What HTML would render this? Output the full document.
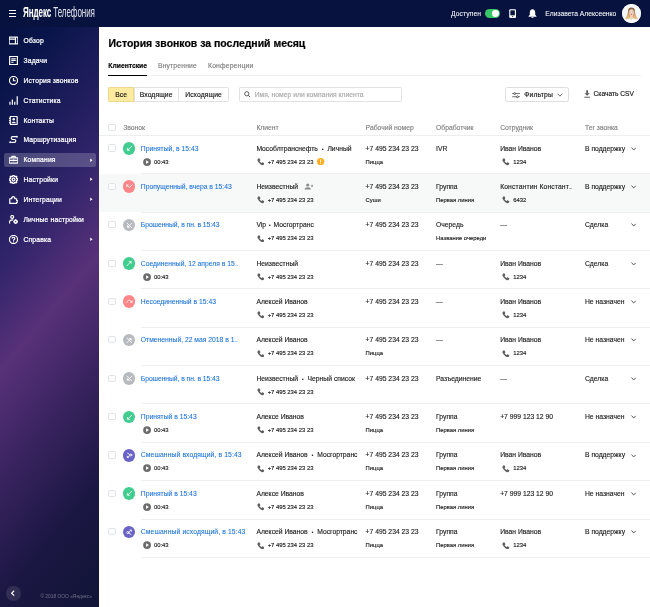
<!DOCTYPE html>
<html lang="ru"><head><meta charset="utf-8"><title>История звонков</title>
<style>
html,body{margin:0;padding:0;width:650px;height:607px;overflow:hidden;background:#fff}
#app{position:absolute;left:0;top:0;width:1440px;height:1345px;zoom:0.451389;will-change:transform;font-family:"Liberation Sans",sans-serif;font-size:14px;color:#111;overflow:hidden;-webkit-text-stroke:0.3px currentColor}
#app *{box-sizing:border-box}
svg{display:block}
.hdr{position:absolute;left:0;top:0;width:1440px;height:60px;background:#07123f;color:#fff;-webkit-text-stroke:0.1px #fff}
.burger{position:absolute;left:20px;top:23px;width:16px;height:15px}
.burger i{display:block;height:2.4px;background:#fff;margin-bottom:3.8px}
.logo{position:absolute;left:52px;top:12px;font-size:32px;line-height:34px;white-space:nowrap;transform:scaleX(0.557);transform-origin:0 50%;color:#fff;letter-spacing:-0.3px}
.logo b{font-weight:bold}
.logo i{font-style:normal;color:#dfe1ec;-webkit-text-stroke:0}
.avail{position:absolute;left:999px;top:20px;letter-spacing:.2px;font-size:15px;line-height:20px;white-space:nowrap}
.tgl{position:absolute;left:1075px;top:20px;width:33px;height:19px;border-radius:10px;background:#37c766}
.tgl i{position:absolute;right:2px;top:2px;width:15px;height:15px;border-radius:50%;background:#fff}
.hph{position:absolute;left:1128px;top:20px}
.bell{position:absolute;left:1170px;top:20px}
.uname{position:absolute;left:1208px;top:20px;letter-spacing:-.05px;font-size:15px;line-height:20px;white-space:nowrap}
.ava{position:absolute;left:1377.500px;top:8.500px;width:42px;height:42px;border-radius:50%;overflow:hidden;background:#f4efe9}
.side{position:absolute;left:0;top:60px;width:220px;height:1285px;color:#fff;background:linear-gradient(130deg,#061140 0%,#09154a 9%,#1a1b58 20%,#30246a 34%,#583179 49.5%,#3b2461 64%,#1b1743 82%,#111436 100%)}
.ni{position:absolute;left:8px;width:204px;height:32px;border-radius:5px}
.ni.act{background:rgba(255,255,255,0.2)}
.nic{position:absolute;left:12px;top:6px}
.nl{position:absolute;left:44px;top:6px;font-size:15px;-webkit-text-stroke:0.5px #fff;letter-spacing:.35px;line-height:20px;font-weight:normal;white-space:nowrap}
.arr{position:absolute;right:6.500px;top:11px;width:6px;height:10px}
.back{position:absolute;left:13.500px;top:1238.500px;width:32px;height:32px;border-radius:50%;background:rgba(255,255,255,0.1)}
.copy{position:absolute;left:89.500px;top:1256.500px;font-size:10.800px;line-height:14px;color:rgba(255,255,255,0.36);white-space:nowrap;-webkit-text-stroke:0}
.main{position:absolute;left:220px;top:60px;width:1220px;height:1285px;background:#fff}
h1{position:absolute;left:20.500px;top:20.200px;margin:0;font-size:23.200px;-webkit-text-stroke:0.45px #000;line-height:36px;font-weight:bold;white-space:nowrap;color:#000}
.tabs{position:absolute;left:20px;top:72px;width:1180px;height:37px;border-bottom:2px solid #f0f0f0}
.tab{position:absolute;top:4px;font-size:14px;line-height:20px;color:#7d7d7d;white-space:nowrap;letter-spacing:.38px;font-size:15px}
.tab.on{left:0;color:#000;font-weight:bold;letter-spacing:0}
.tab.on:after{content:"";position:absolute;left:0;right:0;top:31px;height:2px;background:#000}
.tab.t2{left:110px}.tab.t3{left:221px}
.seg{position:absolute;left:20px;top:133px;height:32px}
.sb{position:absolute;top:0;height:32px;border:1px solid #e2e2e2;font-size:15px;letter-spacing:.2px;line-height:30px;text-align:center;white-space:nowrap;background:#fff}
.s1{left:0;width:57px;background:#ffeba0;border-color:#ecd98c;z-index:1;border-radius:3px 0 0 3px}
.s2{left:56px;width:100px}
.s3{left:155px;width:112px;border-radius:0 3px 3px 0}
.search{position:absolute;left:310px;top:133px;width:360px;height:32px;border:1px solid #e2e2e2;border-radius:3px}
.search svg{position:absolute;left:7.500px;top:6.500px}
.search span{position:absolute;left:32px;top:0;line-height:30px;font-size:15px;color:#a8a8a8;white-space:nowrap}
.fbtn{position:absolute;left:899px;top:133px;width:141px;height:32px;border:1px solid #dedede;border-radius:5px}
.fbtn svg:first-child{position:absolute;left:13px;top:8.500px}
.fbtn span{position:absolute;left:40px;top:0;line-height:30px;font-size:15px;letter-spacing:.4px;white-space:nowrap}
.fbtn svg:last-child{position:absolute;left:113px;top:10.500px}
.csv{position:absolute;left:1070px;top:133px;height:32px}
.csv svg{position:absolute;left:4px;top:6px}
.csv span{position:absolute;left:25px;top:0;line-height:32px;font-size:14.700px;white-space:nowrap}
.thead{position:absolute;left:0;top:201px;width:1220px;padding-left:20px;height:41px;border-bottom:1px solid #eceeef}
.th{position:absolute;top:11.500px;font-size:15px;line-height:20px;color:#808080;white-space:nowrap}
.cb{position:absolute;left:0;width:16px;height:16px;border:1px solid #dfe3e7;border-radius:4px;background:#fff}
.thead .cb{top:13.500px;left:20px}
.h1{left:53px}.h2{left:348px}.h3{left:590px}.h4{left:746px}.h5{left:888px}.h6{left:1076px}
.tbody{position:absolute;left:0;top:240px;width:1220px}
.row{position:relative;height:85px;width:1220px}
.row.hl{background:#f7f8f8}
.row .cb{left:20px;top:20px}
.ci{position:absolute;left:52px;top:14.700px;width:28px;height:28px;border-radius:50%}
.c{position:absolute;top:0;white-space:nowrap}
.c1{left:92px}.c2{left:348px}.c3{left:590px}.c4{left:746px}.c5{left:888px}.c6{left:1076px}
.l1{position:absolute;left:0;top:18px;font-size:15px;line-height:20px;white-space:nowrap;color:#1c1c1c}
.l2{position:absolute;left:0;top:49px;height:18px;white-space:nowrap}
.s11{position:relative;font-size:13px;color:#1c1c1c;-webkit-text-stroke:0.32px currentColor;line-height:18px;display:inline-block;vertical-align:top}
.lnk{color:#1670dd;-webkit-text-stroke:0.15px #1670dd}
.dot{font-weight:normal;font-size:12.500px;vertical-align:0;margin:0 2px;-webkit-text-stroke:0}
.dot.w{margin:0 4.200px}
.el{display:inline-block;width:7.500px;transform:scaleX(.5);transform-origin:0 50%}
.phi{display:inline-block;vertical-align:top;margin:1px 7px 0 1px}
.c5 .phi{margin-left:5px}
.pli{display:inline-block;vertical-align:top;margin:0 6px 0 5px}
.wrn{display:inline-block;vertical-align:top;margin:1px 0 0 9px}
.adu{display:inline-block;vertical-align:-2px;margin-left:8px}
.chv{position:absolute;left:1177.500px;top:25px}
.sep{position:absolute;left:92px;right:0;bottom:0;height:1px;background:#efefef}

.nic svg [stroke]{stroke-width:2.450px}

</style></head><body>
<div id="app">
<div class="hdr">
 <span class="burger"><i></i><i></i><i></i></span>
 <span class="logo"><b>Яндекс</b> <i>Телефония</i></span>
 <span class="avail">Доступен</span>
 <span class="tgl"><i></i></span>
 <span class="hph"><svg width="16" height="20" viewBox="0 0 16 20" ><rect x="0.500" y="0.300" width="15" height="19.400" rx="2.200" fill="#fff"/><rect x="3" y="3" width="10" height="11" fill="#07123f"/><circle cx="8" cy="16.800" r="1.200" fill="#07123f"/></svg></span>
 <span class="bell"><svg width="20" height="21" viewBox="0 0 20 21" ><path d="M10 0.800C14 0.800 16 4 16 8V12.500L18.800 16V17H1.200V16L4 12.500V8C4 4 6 0.800 10 0.800Z" fill="#fff"/><path d="M7.500 18.200H12.500C12.500 21.400 7.500 21.400 7.500 18.200Z" fill="#fff"/></svg></span>
 <span class="uname">Елизавета Алексеенко</span>
 <span class="ava"><svg width="42" height="42" viewBox="0 0 42 42"><defs><linearGradient id="hg" x1="0" y1="0" x2="0" y2="1"><stop offset="0" stop-color="#7b573b"/><stop offset="0.35" stop-color="#b88a58"/><stop offset="0.7" stop-color="#e0b070"/><stop offset="1" stop-color="#ecc68e"/></linearGradient></defs><rect width="42" height="42" fill="#f4f6f8"/><path d="M13.500 15C12.500 5.500 29.500 5.500 28.500 15C29.500 23 31.500 28.500 35 33L27 35H15L7 33C10.500 28.500 12.500 23 13.500 15Z" fill="url(#hg)"/><path d="M18.300 24H23.700V33H18.300Z" fill="#ecd2c4"/><ellipse cx="21" cy="18.800" rx="4.900" ry="6.900" fill="#efd6c8"/><path d="M16.100 16.500C17 10.500 25 10.500 25.900 16.500C24.500 13.200 22.500 12.300 21 12.300C19.500 12.300 17.500 13.200 16.100 16.500Z" fill="#9a7048"/><circle cx="18.800" cy="17.700" r="0.750" fill="#8a7572"/><circle cx="23.200" cy="17.700" r="0.750" fill="#8a7572"/><ellipse cx="21" cy="22.800" rx="1.500" ry="1.250" fill="#e8325c"/><path d="M8 42C8.500 34 14 32 18.300 31.500L21 36L23.700 31.500C28 32 33.500 34 34 42Z" fill="#fbfbfc"/></svg>
</span>
</div>
<div class="side">
<div class="ni" style="top:14px"><span class="nic"><svg width="20" height="20" viewBox="0.9 0.9 18.2 18.2" ><rect x="1.2" y="3.2" width="17.6" height="13.6" fill="none" stroke="#fff" stroke-width="2"/><path d="M1 7.4H14M14 3.200V17" stroke="#fff" stroke-width="2" fill="none"/></svg></span><span class="nl">Обзор</span></div>
<div class="ni" style="top:58px"><span class="nic"><svg width="20" height="20" viewBox="0.9 0.9 18.2 18.2" ><rect x="2.2" y="1.7" width="15.6" height="16.6" fill="none" stroke="#fff" stroke-width="2"/><path d="M5.5 6.5H14.5M5.5 10H14.5M5.5 13.5H10" stroke="#fff" stroke-width="1.8" fill="none"/></svg></span><span class="nl">Задачи</span></div>
<div class="ni" style="top:102px"><span class="nic"><svg width="20" height="20" viewBox="0.9 0.9 18.2 18.2" ><circle cx="10" cy="10" r="8.2" fill="none" stroke="#fff" stroke-width="2"/><path d="M10 5V10.5H14.5" stroke="#fff" stroke-width="2" fill="none"/></svg></span><span class="nl">История звонков</span></div>
<div class="ni" style="top:146px"><span class="nic"><svg width="20" height="20" viewBox="0.9 0.9 18.2 18.2" ><path d="M2.800 12.500V18.800M7.700 8V18.800M12.600 12.500V18.800M17.500 1.500V18.800" stroke="#fff" stroke-width="2.500" fill="none"/></svg></span><span class="nl">Статистика</span></div>
<div class="ni" style="top:190px"><span class="nic"><svg width="20" height="20" viewBox="0.9 0.9 18.2 18.2" ><rect x="3.400" y="1.500" width="14" height="17" rx="1.800" fill="none" stroke="#fff" stroke-width="2.100"/><circle cx="10.400" cy="7.600" r="2.500" fill="#fff"/><path d="M5.600 15.600C6 11.400 14.800 11.400 15.200 15.600Z" fill="#fff"/><path d="M1 5.500H3.500M1 10H3.500M1 14.500H3.500" stroke="#fff" stroke-width="1.800"/></svg></span><span class="nl">Контакты</span></div>
<div class="ni" style="top:234px"><span class="nic"><svg width="20" height="20" viewBox="0.9 0.9 18.2 18.2" ><path d="M15 4.300H8.300C4.500 4.300 4.500 10 8.300 10H11.700C15.500 10 15.500 15.700 11.700 15.700H5.500" stroke="#fff" stroke-width="2.100" fill="none"/><circle cx="16.800" cy="4.300" r="2" fill="#fff"/><circle cx="3.400" cy="15.700" r="2" fill="#fff"/></svg></span><span class="nl">Маршрутизация</span></div>
<div class="ni act" style="top:278px"><span class="nic"><svg width="20" height="20" viewBox="0.9 0.9 18.2 18.2" ><rect x="1.200" y="6.800" width="17.600" height="10.400" rx="1.500" fill="none" stroke="#fff" stroke-width="2.100"/><path d="M6.500 6.800V4.600Q6.500 3.600 7.500 3.600H12.500Q13.500 3.600 13.500 4.600V6.800M1.500 11.600H18.500" stroke="#fff" stroke-width="2.100" fill="none"/><rect x="8.300" y="10" width="3.400" height="3.400" fill="#fff"/></svg></span><span class="nl">Компания</span><i class="arr"><svg width="6" height="10" viewBox="0 0 6 10" ><path d="M0.500 1L5.500 5L0.500 9Z" fill="#fff"/></svg></i></div>
<div class="ni" style="top:322px"><span class="nic"><svg width="20" height="20" viewBox="0.9 0.9 18.2 18.2" ><path d="M8.89 1.47L11.11 1.47L11.70 3.62L13.31 4.29L15.24 3.18L16.82 4.76L15.71 6.69L16.38 8.30L18.53 8.89L18.53 11.11L16.38 11.70L15.71 13.31L16.82 15.24L15.24 16.82L13.31 15.71L11.70 16.38L11.11 18.53L8.89 18.53L8.30 16.38L6.69 15.71L4.76 16.82L3.18 15.24L4.29 13.31L3.62 11.70L1.47 11.11L1.47 8.89L3.62 8.30L4.29 6.69L3.18 4.76L4.76 3.18L6.69 4.29L8.30 3.62Z" fill="none" stroke="#fff" stroke-width="1.9" stroke-linejoin="round"/><circle cx="10" cy="10" r="2.8" fill="none" stroke="#fff" stroke-width="1.9"/></svg></span><span class="nl">Настройки</span><i class="arr"><svg width="6" height="10" viewBox="0 0 6 10" ><path d="M0.500 1L5.500 5L0.500 9Z" fill="#fff"/></svg></i></div>
<div class="ni" style="top:366px"><span class="nic"><svg width="20" height="20" viewBox="0.9 0.9 18.2 18.2" ><path d="M2.500 18V8.500H6.600C5 3 14 3 12.400 8.500H16.200V11.700C20.300 10.300 20.300 16.600 16.200 15.200V18Z" fill="none" stroke="#fff" stroke-width="2.100" stroke-linejoin="round"/></svg></span><span class="nl">Интеграции</span><i class="arr"><svg width="6" height="10" viewBox="0 0 6 10" ><path d="M0.500 1L5.500 5L0.500 9Z" fill="#fff"/></svg></i></div>
<div class="ni" style="top:410px"><span class="nic"><svg width="20" height="20" viewBox="0.9 0.9 18.2 18.2" ><circle cx="7.300" cy="4.800" r="2.900" fill="none" stroke="#fff" stroke-width="2"/><path d="M2 18V15C2 11 7.500 10.300 9.300 11.300" fill="none" stroke="#fff" stroke-width="2"/><circle cx="14.300" cy="14.300" r="2.400" fill="none" stroke="#fff" stroke-width="2"/><path d="M14.300 9.600V11.400M14.300 17.200V19M9.600 14.300H11.400M17.200 14.300H19M11 11L12.200 12.200M16.400 16.400L17.600 17.600M17.600 11L16.400 12.200M12.200 16.400L11 17.600" stroke="#fff" stroke-width="1.900"/></svg></span><span class="nl">Личные настройки</span></div>
<div class="ni" style="top:454px"><span class="nic"><svg width="20" height="20" viewBox="0.9 0.9 18.2 18.2" ><circle cx="10" cy="10" r="8.200" fill="none" stroke="#fff" stroke-width="2"/><path d="M7.300 8C7.300 4.600 12.700 4.600 12.700 8C12.700 10 10 10 10 12.300" stroke="#fff" stroke-width="1.900" fill="none"/><circle cx="10" cy="14.800" r="1.200" fill="#fff"/></svg></span><span class="nl">Справка</span><i class="arr"><svg width="6" height="10" viewBox="0 0 6 10" ><path d="M0.500 1L5.500 5L0.500 9Z" fill="#fff"/></svg></i></div>
 <span class="back"><svg width="32" height="32" viewBox="0 0 32 32" ><path d="M18 10.500L12.500 16L18 21.500" stroke="#fff" stroke-width="2.600" fill="none"/></svg></span>
 <span class="copy">© 2018 ООО «Яндекс»</span>
</div>
<div class="main">
 <h1>История звонков за последний месяц</h1>
 <div class="tabs"><span class="tab on">Клиентские</span><span class="tab t2">Внутренние</span><span class="tab t3">Конференции</span></div>
 <div class="seg"><span class="sb s1">Все</span><span class="sb s2">Входящие</span><span class="sb s3">Исходящие</span></div>
 <div class="search"><svg width="15" height="15" viewBox="0 0 15 15" ><circle cx="6.200" cy="6.200" r="4.700" stroke="#444" stroke-width="1.900" fill="none"/><path d="M9.600 9.600L14 14" stroke="#444" stroke-width="2"/></svg><span>Имя, номер или компания клиента</span></div>
 <div class="fbtn"><svg width="18" height="14" viewBox="0 0 18 14" ><path d="M0.500 3.500H17.500M0.500 10.500H17.500" stroke="#333" stroke-width="1.600"/><circle cx="6" cy="3.500" r="2.100" fill="#fff" stroke="#333" stroke-width="1.600"/><circle cx="12" cy="10.500" r="2.100" fill="#fff" stroke="#333" stroke-width="1.600"/></svg><span>Фильтры</span><svg width="13" height="9" viewBox="0 0 13 9" ><path d="M1 1.500L6.500 7L12 1.500" stroke="#333" stroke-width="1.600" fill="none"/></svg></div>
 <div class="csv"><svg width="14" height="18" viewBox="0 0 14 18" ><path d="M5 0.500H9V7H12.800L7 13L1.200 7H5Z" fill="#5c5c5c"/><path d="M0.800 16H13.200" stroke="#5c5c5c" stroke-width="2.200"/></svg><span>Скачать CSV</span></div>
 <div class="thead"><span class="cb"></span><span class="th h1">Звонок</span><span class="th h2">Клиент</span><span class="th h3">Рабочий номер</span><span class="th h4">Обработчик</span><span class="th h5">Сотрудник</span><span class="th h6">Тег звонка</span></div>
 <div class="tbody">
<div class="row"><span class="cb"></span><span class="ci" style="background:#42cd90"><svg width="28" height="28" viewBox="0 0 28 28" ><path d="M19.300 9.300L12 16.600" stroke="#fff" stroke-width="1.800" fill="none" stroke-linecap="round" stroke-linejoin="round"/><path d="M9.400 19.100V13.500L15 19.100Z" fill="#fff" stroke="#fff" stroke-width="0.600" stroke-linejoin="round"/></svg></span>
<div class="c c1"><div class="l1"><a class="lnk">Принятый, в 15:43</a></div><div class="l2"><span class="pli"><svg width="18" height="18" viewBox="0 0 18 18" ><circle cx="9" cy="9" r="8.700" fill="#6c6c6c"/><path d="M6.800 4.800L13.200 9L6.800 13.200Z" fill="#fff"/></svg></span><span class="s11 dur">00:43</span></div></div>
<div class="c c2"><div class="l1">Мособлтранснефть <b class="dot w">•</b> Личный</div><div class="l2"><span class="phi"><svg width="17" height="17" viewBox="0 0 12 12" ><path d="M2.300 0.800C3 0.200 3.700 0.400 4.100 1.100L5.100 2.900C5.400 3.500 5.200 4 4.700 4.400L4 5C4.600 6.200 5.800 7.400 7 8L7.600 7.300C8 6.800 8.500 6.600 9.100 6.900L10.900 7.900C11.600 8.300 11.800 9 11.200 9.700L10.400 10.600C9.600 11.500 8.300 11.500 7.200 10.900C4.600 9.500 2.500 7.400 1.100 4.800C0.500 3.700 0.500 2.400 1.400 1.600Z" fill="#5e5e5e"/></svg></span><span class="s11">+7 495 234 23 23</span><span class="wrn"><svg width="16" height="16" viewBox="0 0 14 14" ><circle cx="7" cy="7" r="7" fill="#ffab19"/><path d="M7 3.200V8" stroke="#fff" stroke-width="1.800" stroke-linecap="round"/><circle cx="7" cy="10.600" r="1" fill="#fff"/></svg></span></div></div>
<div class="c c3"><div class="l1">+7 495 234 23 23</div><div class="l2"><span class="s11">Пицца</span></div></div>
<div class="c c4"><div class="l1">IVR</div></div>
<div class="c c5"><div class="l1">Иван Иванов</div><div class="l2"><span class="phi"><svg width="17" height="17" viewBox="0 0 12 12" ><path d="M2.300 0.800C3 0.200 3.700 0.400 4.100 1.100L5.100 2.900C5.400 3.500 5.200 4 4.700 4.400L4 5C4.600 6.200 5.800 7.400 7 8L7.600 7.300C8 6.800 8.500 6.600 9.100 6.900L10.900 7.900C11.600 8.300 11.800 9 11.200 9.700L10.400 10.600C9.600 11.500 8.300 11.500 7.200 10.900C4.600 9.500 2.500 7.400 1.100 4.800C0.500 3.700 0.500 2.400 1.400 1.600Z" fill="#5e5e5e"/></svg></span><span class="s11">1234</span></div></div>
<div class="c c6"><div class="l1">В поддержку</div></div><span class="chv"><svg width="12" height="8" viewBox="0 0 12 8" ><path d="M1 1.500L6 6.500L11 1.500" stroke="#222" stroke-width="1.800" fill="none"/></svg></span><i class="sep"></i></div>
<div class="row hl"><span class="cb"></span><span class="ci" style="background:#fd8689"><svg width="28" height="28" viewBox="0 0 28 28" ><path d="M20.200 10.700L14.200 16.400L10.400 13.300" stroke="#fff" stroke-width="1.800" fill="none" stroke-linecap="round" stroke-linejoin="round"/><path d="M7.600 10.600H12.400L7.600 15.400Z" fill="#fff" stroke="#fff" stroke-width="0.600" stroke-linejoin="round"/></svg></span>
<div class="c c1"><div class="l1"><a class="lnk">Пропущенный, вчера в 15:43</a></div></div>
<div class="c c2"><div class="l1">Неизвестный <span class="adu"><svg width="22" height="15" viewBox="0 0 20 14" ><circle cx="7.500" cy="4" r="3.200" fill="#8a8a8a"/><path d="M1 13.500C1 7.500 14 7.500 14 13.500Z" fill="#8a8a8a"/><path d="M16.500 3.500V8.500M14 6H19" stroke="#8a8a8a" stroke-width="1.800"/></svg></span></div><div class="l2"><span class="phi"><svg width="17" height="17" viewBox="0 0 12 12" ><path d="M2.300 0.800C3 0.200 3.700 0.400 4.100 1.100L5.100 2.900C5.400 3.500 5.200 4 4.700 4.400L4 5C4.600 6.200 5.800 7.400 7 8L7.600 7.300C8 6.800 8.500 6.600 9.100 6.900L10.900 7.900C11.600 8.300 11.800 9 11.200 9.700L10.400 10.600C9.600 11.500 8.300 11.500 7.200 10.900C4.600 9.500 2.500 7.400 1.100 4.800C0.500 3.700 0.500 2.400 1.400 1.600Z" fill="#5e5e5e"/></svg></span><span class="s11">+7 495 234 23 23</span></div></div>
<div class="c c3"><div class="l1">+7 495 234 23 23</div><div class="l2"><span class="s11">Суши</span></div></div>
<div class="c c4"><div class="l1">Группа</div><div class="l2"><span class="s11">Первая линия</span></div></div>
<div class="c c5"><div class="l1"><span style="letter-spacing:.3px">Константин Констант<span class="el">…</span></span></div><div class="l2"><span class="phi"><svg width="17" height="17" viewBox="0 0 12 12" ><path d="M2.300 0.800C3 0.200 3.700 0.400 4.100 1.100L5.100 2.900C5.400 3.500 5.200 4 4.700 4.400L4 5C4.600 6.200 5.800 7.400 7 8L7.600 7.300C8 6.800 8.500 6.600 9.100 6.900L10.900 7.900C11.600 8.300 11.800 9 11.200 9.700L10.400 10.600C9.600 11.500 8.300 11.500 7.200 10.900C4.600 9.500 2.500 7.400 1.100 4.800C0.500 3.700 0.500 2.400 1.400 1.600Z" fill="#5e5e5e"/></svg></span><span class="s11">6432</span></div></div>
<div class="c c6"><div class="l1">В поддержку</div></div><span class="chv"><svg width="12" height="8" viewBox="0 0 12 8" ><path d="M1 1.500L6 6.500L11 1.500" stroke="#222" stroke-width="1.800" fill="none"/></svg></span><i class="sep"></i></div>
<div class="row"><span class="cb"></span><span class="ci" style="background:#b7babf"><svg width="28" height="28" viewBox="0 0 28 28" ><path d="M19.300 9.300L12 16.600" stroke="#fff" stroke-width="1.800" fill="none" stroke-linecap="round" stroke-linejoin="round"/><path d="M9.400 19.100V13.500L15 19.100Z" fill="#fff" stroke="#fff" stroke-width="0.600" stroke-linejoin="round"/><path d="M9.300 9.300L18.900 18.900" stroke="#fff" stroke-width="1.800" fill="none" stroke-linecap="round" stroke-linejoin="round"/></svg></span>
<div class="c c1"><div class="l1"><a class="lnk" style="letter-spacing:-0.13px">Брошенный, в пн. в 15:43</a></div></div>
<div class="c c2"><div class="l1">Vip <b class="dot">•</b> Мосгортранс</div><div class="l2"><span class="phi"><svg width="17" height="17" viewBox="0 0 12 12" ><path d="M2.300 0.800C3 0.200 3.700 0.400 4.100 1.100L5.100 2.900C5.400 3.500 5.200 4 4.700 4.400L4 5C4.600 6.200 5.800 7.400 7 8L7.600 7.300C8 6.800 8.500 6.600 9.100 6.900L10.900 7.900C11.600 8.300 11.800 9 11.200 9.700L10.400 10.600C9.600 11.500 8.300 11.500 7.200 10.900C4.600 9.500 2.500 7.400 1.100 4.800C0.500 3.700 0.500 2.400 1.400 1.600Z" fill="#5e5e5e"/></svg></span><span class="s11">+7 495 234 23 23</span></div></div>
<div class="c c3"><div class="l1">+7 495 234 23 23</div></div>
<div class="c c4"><div class="l1">Очередь</div><div class="l2"><span class="s11">Название очереди</span></div></div>
<div class="c c5"><div class="l1">—</div></div>
<div class="c c6"><div class="l1">Сделка</div></div><span class="chv"><svg width="12" height="8" viewBox="0 0 12 8" ><path d="M1 1.500L6 6.500L11 1.500" stroke="#222" stroke-width="1.800" fill="none"/></svg></span><i class="sep"></i></div>
<div class="row"><span class="cb"></span><span class="ci" style="background:#42cd90"><svg width="28" height="28" viewBox="0 0 28 28" ><path d="M8.700 19.300L16 12" stroke="#fff" stroke-width="1.800" fill="none" stroke-linecap="round" stroke-linejoin="round"/><path d="M18.600 9.400V15L13 9.400Z" fill="#fff" stroke="#fff" stroke-width="0.600" stroke-linejoin="round"/></svg></span>
<div class="c c1"><div class="l1"><a class="lnk">Соединенный, 12 апреля в 15<span class="el">…</span></a></div><div class="l2"><span class="pli"><svg width="18" height="18" viewBox="0 0 18 18" ><circle cx="9" cy="9" r="8.700" fill="#6c6c6c"/><path d="M6.800 4.800L13.200 9L6.800 13.200Z" fill="#fff"/></svg></span><span class="s11 dur">00:43</span></div></div>
<div class="c c2"><div class="l1">Неизвестный</div><div class="l2"><span class="phi"><svg width="17" height="17" viewBox="0 0 12 12" ><path d="M2.300 0.800C3 0.200 3.700 0.400 4.100 1.100L5.100 2.900C5.400 3.500 5.200 4 4.700 4.400L4 5C4.600 6.200 5.800 7.400 7 8L7.600 7.300C8 6.800 8.500 6.600 9.100 6.900L10.900 7.900C11.600 8.300 11.800 9 11.200 9.700L10.400 10.600C9.600 11.500 8.300 11.500 7.200 10.900C4.600 9.500 2.500 7.400 1.100 4.800C0.500 3.700 0.500 2.400 1.400 1.600Z" fill="#5e5e5e"/></svg></span><span class="s11">+7 495 234 23 23</span></div></div>
<div class="c c3"><div class="l1">+7 495 234 23 23</div></div>
<div class="c c4"><div class="l1">—</div></div>
<div class="c c5"><div class="l1">Иван Иванов</div><div class="l2"><span class="phi"><svg width="17" height="17" viewBox="0 0 12 12" ><path d="M2.300 0.800C3 0.200 3.700 0.400 4.100 1.100L5.100 2.900C5.400 3.500 5.200 4 4.700 4.400L4 5C4.600 6.200 5.800 7.400 7 8L7.600 7.300C8 6.800 8.500 6.600 9.100 6.900L10.900 7.900C11.600 8.300 11.800 9 11.200 9.700L10.400 10.600C9.600 11.500 8.300 11.500 7.200 10.900C4.600 9.500 2.500 7.400 1.100 4.800C0.500 3.700 0.500 2.400 1.400 1.600Z" fill="#5e5e5e"/></svg></span><span class="s11">1234</span></div></div>
<div class="c c6"><div class="l1">Сделка</div></div><span class="chv"><svg width="12" height="8" viewBox="0 0 12 8" ><path d="M1 1.500L6 6.500L11 1.500" stroke="#222" stroke-width="1.800" fill="none"/></svg></span><i class="sep"></i></div>
<div class="row"><span class="cb"></span><span class="ci" style="background:#fd8689"><svg width="28" height="28" viewBox="0 0 28 28" ><path d="M7.800 16.200L13.300 10.700L17.600 14" stroke="#fff" stroke-width="1.800" fill="none" stroke-linecap="round" stroke-linejoin="round"/><path d="M20.800 16.800H16L20.800 12Z" fill="#fff" stroke="#fff" stroke-width="0.600" stroke-linejoin="round"/></svg></span>
<div class="c c1"><div class="l1"><a class="lnk">Несоединенный в 15:43</a></div></div>
<div class="c c2"><div class="l1">Алексей Иванов</div><div class="l2"><span class="phi"><svg width="17" height="17" viewBox="0 0 12 12" ><path d="M2.300 0.800C3 0.200 3.700 0.400 4.100 1.100L5.100 2.900C5.400 3.500 5.200 4 4.700 4.400L4 5C4.600 6.200 5.800 7.400 7 8L7.600 7.300C8 6.800 8.500 6.600 9.100 6.900L10.900 7.900C11.600 8.300 11.800 9 11.200 9.700L10.400 10.600C9.600 11.500 8.300 11.500 7.200 10.900C4.600 9.500 2.500 7.400 1.100 4.800C0.500 3.700 0.500 2.400 1.400 1.600Z" fill="#5e5e5e"/></svg></span><span class="s11">+7 495 234 23 23</span></div></div>
<div class="c c3"><div class="l1">+7 495 234 23 23</div></div>
<div class="c c4"><div class="l1">—</div></div>
<div class="c c5"><div class="l1">Иван Иванов</div><div class="l2"><span class="phi"><svg width="17" height="17" viewBox="0 0 12 12" ><path d="M2.300 0.800C3 0.200 3.700 0.400 4.100 1.100L5.100 2.900C5.400 3.500 5.200 4 4.700 4.400L4 5C4.600 6.200 5.800 7.400 7 8L7.600 7.300C8 6.800 8.500 6.600 9.100 6.900L10.900 7.900C11.600 8.300 11.800 9 11.200 9.700L10.400 10.600C9.600 11.500 8.300 11.500 7.200 10.900C4.600 9.500 2.500 7.400 1.100 4.800C0.500 3.700 0.500 2.400 1.400 1.600Z" fill="#5e5e5e"/></svg></span><span class="s11">1234</span></div></div>
<div class="c c6"><div class="l1">Не назначен</div></div><span class="chv"><svg width="12" height="8" viewBox="0 0 12 8" ><path d="M1 1.500L6 6.500L11 1.500" stroke="#222" stroke-width="1.800" fill="none"/></svg></span><i class="sep"></i></div>
<div class="row"><span class="cb"></span><span class="ci" style="background:#b7babf"><svg width="28" height="28" viewBox="0 0 28 28" ><path d="M8.700 19.300L16 12" stroke="#fff" stroke-width="1.800" fill="none" stroke-linecap="round" stroke-linejoin="round"/><path d="M18.600 9.400V15L13 9.400Z" fill="#fff" stroke="#fff" stroke-width="0.600" stroke-linejoin="round"/><path d="M9.300 9.300L18.900 18.900" stroke="#fff" stroke-width="1.800" fill="none" stroke-linecap="round" stroke-linejoin="round"/></svg></span>
<div class="c c1"><div class="l1"><a class="lnk">Отмененный, 22 мая 2018 в 1<span class="el">…</span></a></div></div>
<div class="c c2"><div class="l1">Алексей Иванов</div><div class="l2"><span class="phi"><svg width="17" height="17" viewBox="0 0 12 12" ><path d="M2.300 0.800C3 0.200 3.700 0.400 4.100 1.100L5.100 2.900C5.400 3.500 5.200 4 4.700 4.400L4 5C4.600 6.200 5.800 7.400 7 8L7.600 7.300C8 6.800 8.500 6.600 9.100 6.900L10.900 7.900C11.600 8.300 11.800 9 11.200 9.700L10.400 10.600C9.600 11.500 8.300 11.500 7.200 10.900C4.600 9.500 2.500 7.400 1.100 4.800C0.500 3.700 0.500 2.400 1.400 1.600Z" fill="#5e5e5e"/></svg></span><span class="s11">+7 495 234 23 23</span></div></div>
<div class="c c3"><div class="l1">+7 495 234 23 23</div><div class="l2"><span class="s11">Пицца</span></div></div>
<div class="c c4"><div class="l1">—</div></div>
<div class="c c5"><div class="l1">Иван Иванов</div><div class="l2"><span class="phi"><svg width="17" height="17" viewBox="0 0 12 12" ><path d="M2.300 0.800C3 0.200 3.700 0.400 4.100 1.100L5.100 2.900C5.400 3.500 5.200 4 4.700 4.400L4 5C4.600 6.200 5.800 7.400 7 8L7.600 7.300C8 6.800 8.500 6.600 9.100 6.900L10.900 7.900C11.600 8.300 11.800 9 11.200 9.700L10.400 10.600C9.600 11.500 8.300 11.500 7.200 10.900C4.600 9.500 2.500 7.400 1.100 4.800C0.500 3.700 0.500 2.400 1.400 1.600Z" fill="#5e5e5e"/></svg></span><span class="s11">1234</span></div></div>
<div class="c c6"><div class="l1">Не назначен</div></div><span class="chv"><svg width="12" height="8" viewBox="0 0 12 8" ><path d="M1 1.500L6 6.500L11 1.500" stroke="#222" stroke-width="1.800" fill="none"/></svg></span><i class="sep"></i></div>
<div class="row"><span class="cb"></span><span class="ci" style="background:#b7babf"><svg width="28" height="28" viewBox="0 0 28 28" ><path d="M19.300 9.300L12 16.600" stroke="#fff" stroke-width="1.800" fill="none" stroke-linecap="round" stroke-linejoin="round"/><path d="M9.400 19.100V13.500L15 19.100Z" fill="#fff" stroke="#fff" stroke-width="0.600" stroke-linejoin="round"/><path d="M9.300 9.300L18.900 18.900" stroke="#fff" stroke-width="1.800" fill="none" stroke-linecap="round" stroke-linejoin="round"/></svg></span>
<div class="c c1"><div class="l1"><a class="lnk" style="letter-spacing:-0.13px">Брошенный, в пн. в 15:43</a></div></div>
<div class="c c2"><div class="l1">Неизвестный <b class="dot w">•</b> Черный список</div><div class="l2"><span class="phi"><svg width="17" height="17" viewBox="0 0 12 12" ><path d="M2.300 0.800C3 0.200 3.700 0.400 4.100 1.100L5.100 2.900C5.400 3.500 5.200 4 4.700 4.400L4 5C4.600 6.200 5.800 7.400 7 8L7.600 7.300C8 6.800 8.500 6.600 9.100 6.900L10.900 7.900C11.600 8.300 11.800 9 11.200 9.700L10.400 10.600C9.600 11.500 8.300 11.500 7.200 10.900C4.600 9.500 2.500 7.400 1.100 4.800C0.500 3.700 0.500 2.400 1.400 1.600Z" fill="#5e5e5e"/></svg></span><span class="s11">+7 495 234 23 23</span></div></div>
<div class="c c3"><div class="l1">+7 495 234 23 23</div></div>
<div class="c c4"><div class="l1">Разъединение</div></div>
<div class="c c5"><div class="l1">—</div></div>
<div class="c c6"><div class="l1">Сделка</div></div><span class="chv"><svg width="12" height="8" viewBox="0 0 12 8" ><path d="M1 1.500L6 6.500L11 1.500" stroke="#222" stroke-width="1.800" fill="none"/></svg></span><i class="sep"></i></div>
<div class="row"><span class="cb"></span><span class="ci" style="background:#42cd90"><svg width="28" height="28" viewBox="0 0 28 28" ><path d="M19.300 9.300L12 16.600" stroke="#fff" stroke-width="1.800" fill="none" stroke-linecap="round" stroke-linejoin="round"/><path d="M9.400 19.100V13.500L15 19.100Z" fill="#fff" stroke="#fff" stroke-width="0.600" stroke-linejoin="round"/></svg></span>
<div class="c c1"><div class="l1"><a class="lnk">Принятый в 15:43</a></div><div class="l2"><span class="pli"><svg width="18" height="18" viewBox="0 0 18 18" ><circle cx="9" cy="9" r="8.700" fill="#6c6c6c"/><path d="M6.800 4.800L13.200 9L6.800 13.200Z" fill="#fff"/></svg></span><span class="s11 dur">00:43</span></div></div>
<div class="c c2"><div class="l1">Алексе Иванов</div><div class="l2"><span class="phi"><svg width="17" height="17" viewBox="0 0 12 12" ><path d="M2.300 0.800C3 0.200 3.700 0.400 4.100 1.100L5.100 2.900C5.400 3.500 5.200 4 4.700 4.400L4 5C4.600 6.200 5.800 7.400 7 8L7.600 7.300C8 6.800 8.500 6.600 9.100 6.900L10.900 7.900C11.600 8.300 11.800 9 11.200 9.700L10.400 10.600C9.600 11.500 8.300 11.500 7.200 10.900C4.600 9.500 2.500 7.400 1.100 4.800C0.500 3.700 0.500 2.400 1.400 1.600Z" fill="#5e5e5e"/></svg></span><span class="s11">+7 495 234 23 23</span></div></div>
<div class="c c3"><div class="l1">+7 495 234 23 23</div><div class="l2"><span class="s11">Пицца</span></div></div>
<div class="c c4"><div class="l1">Группа</div><div class="l2"><span class="s11">Первая линия</span></div></div>
<div class="c c5"><div class="l1">+7 999 123 12 90</div></div>
<div class="c c6"><div class="l1">Не назначен</div></div><span class="chv"><svg width="12" height="8" viewBox="0 0 12 8" ><path d="M1 1.500L6 6.500L11 1.500" stroke="#222" stroke-width="1.800" fill="none"/></svg></span><i class="sep"></i></div>
<div class="row"><span class="cb"></span><span class="ci" style="background:#6a63c7"><svg width="28" height="28" viewBox="0 0 28 28" ><circle cx="17.300" cy="13.400" r="2.300" stroke="#fff" stroke-width="1.800" fill="none" stroke-linecap="round" stroke-linejoin="round"/><path d="M10 9.200L15.200 12.600M15 14.600L11.500 17.500" stroke="#fff" stroke-width="1.800" fill="none" stroke-linecap="round" stroke-linejoin="round"/><path d="M8.800 19.600V15.200L13.200 19.600Z" fill="#fff" stroke="#fff" stroke-width="0.600" stroke-linejoin="round"/></svg></span>
<div class="c c1"><div class="l1"><a class="lnk" style="letter-spacing:0.24px">Смешанный входящий, в 15:43</a></div><div class="l2"><span class="pli"><svg width="18" height="18" viewBox="0 0 18 18" ><circle cx="9" cy="9" r="8.700" fill="#6c6c6c"/><path d="M6.800 4.800L13.200 9L6.800 13.200Z" fill="#fff"/></svg></span><span class="s11 dur">00:43</span></div></div>
<div class="c c2"><div class="l1">Алексей Иванов <b class="dot w">•</b> Мосгортранс</div><div class="l2"><span class="phi"><svg width="17" height="17" viewBox="0 0 12 12" ><path d="M2.300 0.800C3 0.200 3.700 0.400 4.100 1.100L5.100 2.900C5.400 3.500 5.200 4 4.700 4.400L4 5C4.600 6.200 5.800 7.400 7 8L7.600 7.300C8 6.800 8.500 6.600 9.100 6.900L10.900 7.900C11.600 8.300 11.800 9 11.200 9.700L10.400 10.600C9.600 11.500 8.300 11.500 7.200 10.900C4.600 9.500 2.500 7.400 1.100 4.800C0.500 3.700 0.500 2.400 1.400 1.600Z" fill="#5e5e5e"/></svg></span><span class="s11">+7 495 234 23 23</span></div></div>
<div class="c c3"><div class="l1">+7 495 234 23 23</div><div class="l2"><span class="s11">Пицца</span></div></div>
<div class="c c4"><div class="l1">Группа</div><div class="l2"><span class="s11">Первая линия</span></div></div>
<div class="c c5"><div class="l1">Иван Иванов</div><div class="l2"><span class="phi"><svg width="17" height="17" viewBox="0 0 12 12" ><path d="M2.300 0.800C3 0.200 3.700 0.400 4.100 1.100L5.100 2.900C5.400 3.500 5.200 4 4.700 4.400L4 5C4.600 6.200 5.800 7.400 7 8L7.600 7.300C8 6.800 8.500 6.600 9.100 6.900L10.900 7.900C11.600 8.300 11.800 9 11.200 9.700L10.400 10.600C9.600 11.500 8.300 11.500 7.200 10.900C4.600 9.500 2.500 7.400 1.100 4.800C0.500 3.700 0.500 2.400 1.400 1.600Z" fill="#5e5e5e"/></svg></span><span class="s11">1234</span></div></div>
<div class="c c6"><div class="l1">В поддержку</div></div><span class="chv"><svg width="12" height="8" viewBox="0 0 12 8" ><path d="M1 1.500L6 6.500L11 1.500" stroke="#222" stroke-width="1.800" fill="none"/></svg></span><i class="sep"></i></div>
<div class="row"><span class="cb"></span><span class="ci" style="background:#42cd90"><svg width="28" height="28" viewBox="0 0 28 28" ><path d="M19.300 9.300L12 16.600" stroke="#fff" stroke-width="1.800" fill="none" stroke-linecap="round" stroke-linejoin="round"/><path d="M9.400 19.100V13.500L15 19.100Z" fill="#fff" stroke="#fff" stroke-width="0.600" stroke-linejoin="round"/></svg></span>
<div class="c c1"><div class="l1"><a class="lnk">Принятый в 15:43</a></div><div class="l2"><span class="pli"><svg width="18" height="18" viewBox="0 0 18 18" ><circle cx="9" cy="9" r="8.700" fill="#6c6c6c"/><path d="M6.800 4.800L13.200 9L6.800 13.200Z" fill="#fff"/></svg></span><span class="s11 dur">00:43</span></div></div>
<div class="c c2"><div class="l1">Алексе Иванов</div><div class="l2"><span class="phi"><svg width="17" height="17" viewBox="0 0 12 12" ><path d="M2.300 0.800C3 0.200 3.700 0.400 4.100 1.100L5.100 2.900C5.400 3.500 5.200 4 4.700 4.400L4 5C4.600 6.200 5.800 7.400 7 8L7.600 7.300C8 6.800 8.500 6.600 9.100 6.900L10.900 7.900C11.600 8.300 11.800 9 11.200 9.700L10.400 10.600C9.600 11.500 8.300 11.500 7.200 10.900C4.600 9.500 2.500 7.400 1.100 4.800C0.500 3.700 0.500 2.400 1.400 1.600Z" fill="#5e5e5e"/></svg></span><span class="s11">+7 495 234 23 23</span></div></div>
<div class="c c3"><div class="l1">+7 495 234 23 23</div><div class="l2"><span class="s11">Пицца</span></div></div>
<div class="c c4"><div class="l1">Группа</div><div class="l2"><span class="s11">Первая линия</span></div></div>
<div class="c c5"><div class="l1">+7 999 123 12 90</div></div>
<div class="c c6"><div class="l1">Не назначен</div></div><span class="chv"><svg width="12" height="8" viewBox="0 0 12 8" ><path d="M1 1.500L6 6.500L11 1.500" stroke="#222" stroke-width="1.800" fill="none"/></svg></span><i class="sep"></i></div>
<div class="row"><span class="cb"></span><span class="ci" style="background:#6a63c7"><svg width="28" height="28" viewBox="0 0 28 28" ><circle cx="10.700" cy="14.600" r="2.300" stroke="#fff" stroke-width="1.800" fill="none" stroke-linecap="round" stroke-linejoin="round"/><path d="M12.800 13.400L16.500 10.500M12.800 15.800L18 19" stroke="#fff" stroke-width="1.800" fill="none" stroke-linecap="round" stroke-linejoin="round"/><path d="M19.200 8.400V12.800L14.800 8.400Z" fill="#fff" stroke="#fff" stroke-width="0.600" stroke-linejoin="round"/></svg></span>
<div class="c c1"><div class="l1"><a class="lnk" style="letter-spacing:0.25px">Смешанный исходящий, в 15:43</a></div><div class="l2"><span class="pli"><svg width="18" height="18" viewBox="0 0 18 18" ><circle cx="9" cy="9" r="8.700" fill="#6c6c6c"/><path d="M6.800 4.800L13.200 9L6.800 13.200Z" fill="#fff"/></svg></span><span class="s11 dur">00:43</span></div></div>
<div class="c c2"><div class="l1">Алексей Иванов <b class="dot w">•</b> Мосгортранс</div><div class="l2"><span class="phi"><svg width="17" height="17" viewBox="0 0 12 12" ><path d="M2.300 0.800C3 0.200 3.700 0.400 4.100 1.100L5.100 2.900C5.400 3.500 5.200 4 4.700 4.400L4 5C4.600 6.200 5.800 7.400 7 8L7.600 7.300C8 6.800 8.500 6.600 9.100 6.900L10.900 7.900C11.600 8.300 11.800 9 11.200 9.700L10.400 10.600C9.600 11.500 8.300 11.500 7.200 10.900C4.600 9.500 2.500 7.400 1.100 4.800C0.500 3.700 0.500 2.400 1.400 1.600Z" fill="#5e5e5e"/></svg></span><span class="s11">+7 495 234 23 23</span></div></div>
<div class="c c3"><div class="l1">+7 495 234 23 23</div><div class="l2"><span class="s11">Пицца</span></div></div>
<div class="c c4"><div class="l1">Группа</div><div class="l2"><span class="s11">Первая линия</span></div></div>
<div class="c c5"><div class="l1">Иван Иванов</div><div class="l2"><span class="phi"><svg width="17" height="17" viewBox="0 0 12 12" ><path d="M2.300 0.800C3 0.200 3.700 0.400 4.100 1.100L5.100 2.900C5.400 3.500 5.200 4 4.700 4.400L4 5C4.600 6.200 5.800 7.400 7 8L7.600 7.300C8 6.800 8.500 6.600 9.100 6.900L10.900 7.900C11.600 8.300 11.800 9 11.200 9.700L10.400 10.600C9.600 11.500 8.300 11.500 7.200 10.900C4.600 9.500 2.500 7.400 1.100 4.800C0.500 3.700 0.500 2.400 1.400 1.600Z" fill="#5e5e5e"/></svg></span><span class="s11">1234</span></div></div>
<div class="c c6"><div class="l1">В поддержку</div></div><span class="chv"><svg width="12" height="8" viewBox="0 0 12 8" ><path d="M1 1.500L6 6.500L11 1.500" stroke="#222" stroke-width="1.800" fill="none"/></svg></span><i class="sep"></i></div>
 </div>
</div>
</div>
</body></html>
